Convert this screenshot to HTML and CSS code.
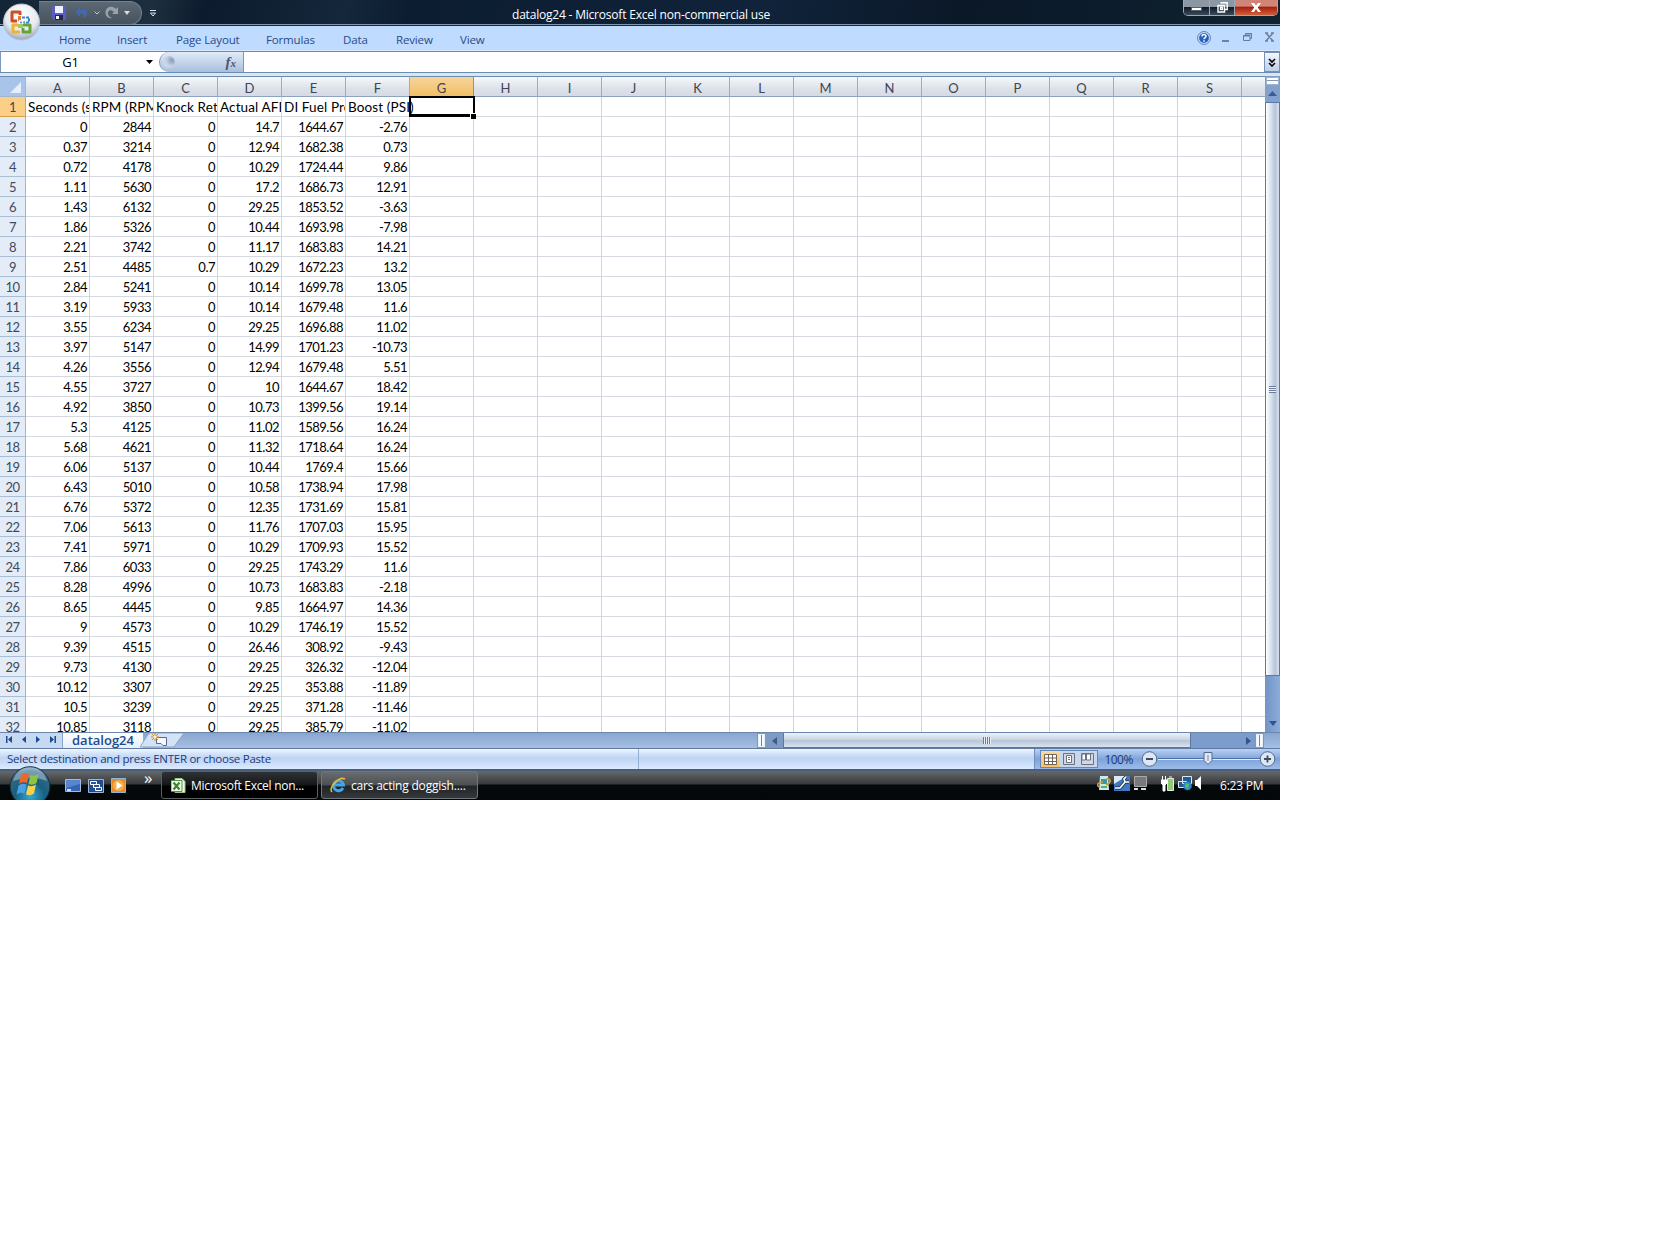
FILE: index.html
```html
<!DOCTYPE html>
<html lang="en">
<head>
<meta charset="utf-8">
<title>datalog24 - Microsoft Excel</title>
<link rel="stylesheet" href="styles.css">
</head>
<body>
<div class="desktop">
  <header class="titlebar">
    <div class="qat">
      <svg class="q-save" width="14" height="14" viewBox="0 0 14 14"><path d="M1 0h12l1 1v13H2l-2-2V1z" fill="#5d5cc0"/><path d="M3 0h8v7H3z" fill="#eef1ff"/><path d="M3 9h8v5H3z" fill="#242451"/><path d="M4 10h3v3H4z" fill="#fff"/></svg>
      <svg class="q-undo" width="14" height="14" viewBox="0 0 14 14"><path d="M0 6l5-5v3c5-2 8 0 7 4-.5 2-2 4-4 5 2-4 1-6-3-5v3z" fill="#4468ae"/></svg>
      <svg class="q-v" width="6" height="4" viewBox="0 0 6 4"><path d="M.5 .5L3 3 5.500.5" fill="none" stroke="#c0cad6"/></svg>
      <svg class="q-redo" width="14" height="14" viewBox="0 0 14 14"><path d="M13 8H7l2-2C6 3 3 4 3 7c0 2 1 4 4 5-4 1-7-2-6.500-6C1 1 7-1 11 3l2-2z" fill="#96a2ac"/></svg>
      <svg class="q-v2" width="6" height="4" viewBox="0 0 6 4"><path d="M0 0h6L3 4z" fill="#d6dde5"/></svg>
    </div>
    <svg class="q-more" width="6" height="7" viewBox="0 0 6 7"><path d="M0 .5h6M.5 3h5L3 6z" fill="none" stroke="#dde4ec"/></svg>
    <h1 class="title">datalog24 - Microsoft Excel non-commercial use</h1>
    <div class="winbtns">
      <span class="wb wb-min"><svg width="11" height="4"><path d="M.5.5h10v3H.5z" fill="#fff" stroke="#56616b"/></svg></span>
      <span class="wb wb-max"><svg width="11" height="11"><path d="M3.500.8h6.700v6.700H8M1 3.500h6.500V10H1zM3.500 5.500h2v2h-2z" fill="none" stroke="#fff" stroke-width="1.400"/></svg></span>
      <span class="wb wb-close"><svg width="10" height="9" viewBox="0 0 10 9"><path d="M0 0h3l2 2.500L7 0h3L6.800 4.400 10 9H7L5 6.300 3 9H0l3.200-4.600z" fill="#fff"/></svg></span>
    </div>
  </header>
  <svg class="orb" width="40" height="42" viewBox="0 0 40 42">
    <defs><radialGradient id="og" cx=".5" cy=".3" r=".7"><stop offset="0" stop-color="#fff"/><stop offset=".65" stop-color="#e6e9ee"/><stop offset="1" stop-color="#9aa6b9"/></radialGradient></defs>
    <circle cx="20.500" cy="22" r="18" fill="url(#og)" stroke="#b9c2cf"/>
    <g fill="none" stroke-width="3">
      <path d="M19 15v-3h-8v9h5" stroke="#cf4d22" stroke-linejoin="round"/>
      <path d="M21 17.500h7v5h-5" stroke="#3f85c6" stroke-width="2" stroke-dasharray="3 1"/>
      <path d="M17 25h-5v7h7" stroke="#edb42f" stroke-linejoin="round"/>
      <path d="M21 25h8v7h-7v-4" stroke="#65a33c" stroke-linejoin="round"/>
    </g>
    <path d="M17 16h3v5h-3z" fill="#e77a3a"/><path d="M17 24h5v4h-5z" fill="#a9c763"/><path d="M18 20h5v4h-5z" fill="#fff"/><path d="M19 22.500h5" stroke="#5b9fd8" stroke-width="2" stroke-dasharray="2 1"/>
  </svg>
  <nav class="ribbon">
    <div class="tabs"><span>Home</span><span>Insert</span><span>Page Layout</span><span>Formulas</span><span>Data</span><span>Review</span><span>View</span></div>
    <div class="ribbon-right">
      <svg width="14" height="14" viewBox="0 0 14 14"><circle cx="7" cy="7" r="6.400" fill="#dbe9ff" stroke="#5578ba"/><circle cx="7" cy="7" r="4.900" fill="#2460bd"/><path d="M5 5.500C5 3 9 3 9 5.300 9 6.600 7 6.500 7 8.300M7 9.300v1.500" fill="none" stroke="#fff" stroke-width="1.500"/></svg>
      <svg width="8" height="14"><path d="M0 9h7v2H0z" fill="#6d83a6"/></svg>
      <svg width="9" height="14"><path d="M2.500 4V2.500h6v5H7M.5 4.500h6.500v5H.5zM0 5h7M2 3h7" fill="none" stroke="#6a7c98"/></svg>
      <svg width="9" height="14"><path d="M1 2l7 8M8 2l-7 8M0 2h3M6 2h3M0 10h3M6 10h3" stroke="#6f7f98" stroke-width="1.500"/></svg>
    </div>
  </nav>
  <div class="formula">
    <div class="namebox"><span>G1</span><svg width="7" height="4"><path d="M0 0h7L3.500 4z"/></svg></div>
    <div class="fxbox"><i class="knob"></i><span class="fx">f<small>x</small></span></div>
    <div class="finput"></div>
    <div class="fexp"><svg width="8" height="9"><path d="M1 1l3 3 3-3M1 5l3 3 3-3" fill="none" stroke="#000" stroke-width="1.600"/></svg></div>
  </div>
  <main class="sheet">
    <div class="grid" id="grid"></div>
    <div class="vscroll">
      <div class="vsplit"></div>
      <div class="vbtn"><svg width="9" height="5"><path d="M0 5l4.500-5L9 5z" fill="#3b5c96"/></svg></div>
      <div class="vthumb"><i></i></div>
      <div class="vtrack"><svg width="8" height="5"><path d="M0 0h8L4 5z" fill="#30548f"/></svg></div>
    </div>
  </main>
  <div class="tabstrip">
    <div class="navs">
      <svg width="6" height="7"><path d="M0 0h1.500v7H0zM6 0v7L2 3.500z"/></svg>
      <svg width="4" height="7"><path d="M4 0v7L0 3.500z"/></svg>
      <svg width="4" height="7"><path d="M0 0v7l4-3.500z"/></svg>
      <svg width="6" height="7"><path d="M6 0H4.500v7H6zM0 0v7l4-3.500z"/></svg>
    </div>
    <div class="sheettab">datalog24</div>
    <svg class="newtab" width="46" height="15" viewBox="0 0 46 15"><path d="M0 14L9 0h35L34 14z" fill="#d3e2f5" stroke="#8ba4c9"/><path d="M16.500 4.500h10v8H23l-2-2h-4.500z" fill="#f5f8fc" stroke="#596c8d"/><path d="M15 0v8M11 4h8M12 1l6 6M18 1l-6 6" stroke="#dc8b26"/><circle cx="15" cy="4" r="1.500" fill="#fff3c4"/></svg>
    <div class="hspace"></div>
    <div class="hsplit"></div>
    <div class="hleft"><svg width="5" height="8"><path d="M5 0v8L0 4z" fill="#3b5c8c"/></svg></div>
    <div class="hthumb"><i></i></div>
    <div class="hright"><svg width="5" height="8"><path d="M0 0v8l5-4z" fill="#30548f"/></svg></div>
    <div class="hsplit"></div>
  </div>
  <div class="status">
    <div class="msg">Select destination and press ENTER or choose Paste</div>
    <div class="gap2"></div>
    <div class="zoombar">
      <div class="views">
        <span class="on"><svg width="13" height="11"><path d="M.5.5h12v10H.5zM4.500 0v11M8.500 0v11M0 4h13M0 7.500h13" fill="#fff" stroke="#6c6558"/></svg></span>
        <span><svg width="12" height="12"><path d="M.5.5h11v11H.5z" fill="#d3d7df" stroke="#6b7282"/><path d="M3.500 2.500h5v7h-5zM5 4.500h2M5 6.500h2" fill="#fff" stroke="#6b7282"/></svg></span>
        <span><svg width="13" height="12"><path d="M.5.500h12v11H.5z" fill="#d3d7df" stroke="#6b7282"/><path d="M1 1h3.500v6H1zM5.500 1h4v6h-4z" fill="#fff" stroke="#6b7282"/></svg></span>
      </div>
      <span class="pct">100%</span>
      <svg class="slider" width="136" height="18" viewBox="0 0 136 18"><path d="M17 8.500h102" stroke="#4b6fa8"/><path d="M17 9.500h102" stroke="#dfebfb"/><g fill="#dce6f4" stroke="#53698c"><circle cx="8.500" cy="9" r="7.300"/><circle cx="126.500" cy="9" r="7.300"/><path d="M63 2.500h8v8l-4 4-4-4z"/></g><path d="M5 9h7M123 9h7M126.500 5.500v7" stroke="#404c60" stroke-width="1.800"/><path d="M67 5v6" stroke="#7a8cab"/></svg>
    </div>
  </div>
  <footer class="taskbar">
    <div class="quick">
      <svg width="16" height="13"><path d="M.5.5h15v12H.5z" fill="#3564b8" stroke="#a5bbdc"/><path d="M1 1h14v4L1 9z" fill="#5686ce"/><path d="M2 10h4v2H2z" fill="#cfe0f6"/></svg>
      <svg width="16" height="14"><path d="M.5.5h15v13H.5z" fill="#234c8b" stroke="#9bb6da"/><path d="M2.500 2.500h6v3h-6zM5.500 5.500h6v3h-6zM7.500 8.500h6v3h-6z" fill="#28559d" stroke="#fff"/></svg>
      <svg width="15" height="15"><path d="M.5.5h14v14H.5z" fill="#e98b22" stroke="#87b9df"/><circle cx="7.500" cy="7.500" r="5.500" fill="#f6ac49"/><path d="M5.500 3.500v8l6-4z" fill="#fff"/></svg>
    </div>
    <span class="chev">»</span>
    <div class="task active"><svg width="15" height="15" viewBox="0 0 15 15"><path d="M4 .5h7l3 3v11H4z" fill="#eef6e8" stroke="#9fc08d"/><path d="M0 2.500h11v11H0z" fill="#f4faf0" stroke="#4f9140"/><path d="M2.500 4.500l6 7M8.500 4.500l-6 7" stroke="#3c8630" stroke-width="2.200"/></svg><span>Microsoft Excel non...</span></div>
    <div class="task"><svg width="16" height="16" viewBox="0 0 16 16"><path d="M13 11a5 5 0 1 1 .5-3H5" fill="none" stroke="#43a6e8" stroke-width="3"/><path d="M2 15C-2 11 9-1 15 2" fill="none" stroke="#e8b83b" stroke-width="1.700"/></svg><span class="ie">cars acting doggish....</span></div>
    <div class="tray">
      <svg width="14" height="15" viewBox="0 0 14 15"><path d="M3 0h8l1 14H2z" fill="#cbe8ef"/><path d="M4 3h6v5H4z" fill="#3498a8"/><path d="M3 11c-5-1-2-5 3-5M9 3c6-1 5 4 0 6" fill="none" stroke="#c9a23c" stroke-width="1.700"/><path d="M4 10h6v2H4z" fill="#54b65f"/></svg>
      <svg width="16" height="15"><path d="M0 0h16v15H0z" fill="#3f78c5"/><path d="M0 0h13L0 8z" fill="#dce9f7"/><path d="M1 12h5l5-6h4M11 6l-1-3 2-2" fill="none" stroke="#263b55" stroke-width="3.500"/><path d="M1 12h5l5-6h4M11 6l-1-3 2-2" fill="none" stroke="#fff" stroke-width="1.700"/></svg>
      <svg width="15" height="15"><path d="M1.500.5h12v10h-12z" fill="#77797c" stroke="#aaa"/><path d="M1 13h4M8 13h5" stroke="#ddd" stroke-width="2"/></svg>
      <svg class="batt" width="14" height="16"><path d="M6.500 2.500h6v12h-6zM8 1h3" fill="#8fca79" stroke="#e5eddf"/><path d="M1.500 0v4M4.500 0v4M0 4h6v3L4 9v6H2V9L0 7z" fill="#fff" stroke="#fff"/></svg>
      <svg width="14" height="15"><path d="M4.500.5h9v7h-9zM.5 5.500h8v6h-8z" fill="#245a92" stroke="#d8e9f8"/><circle cx="9.500" cy="10" r="4.300" fill="#2a85c8"/><path d="M8 7l3 1-1 5-3-2z" fill="#5abf62"/></svg>
      <svg width="8" height="14"><path d="M0 4h2l4-4v14l-4-4H0z" fill="#fff"/></svg>
    </div>
    <span class="clock">6:23 PM</span>
  </footer>
  <svg class="start" width="44" height="34" viewBox="0 0 44 34">
    <defs><radialGradient id="sg" cx=".5" cy=".75" r=".75"><stop offset="0" stop-color="#2faad8"/><stop offset=".5" stop-color="#17607f"/><stop offset=".85" stop-color="#3b6685"/><stop offset="1" stop-color="#8fb3cb"/></radialGradient></defs>
    <circle cx="22" cy="20.500" r="19.800" fill="url(#sg)" stroke="#18303f"/>
    <path d="M5 15C10-3 34-3 39 15 28 10 16 12 5 15z" fill="#c4dcea" opacity=".45"/>
    <path d="M13 9c3-2 5-2 8-1l-2 9c-3-1-5-1-8 1z" fill="#e8692b"/><path d="M22.500 9c3 1 5 1 8-1l-2 9c-3 2-5 2-8 1z" fill="#8cc540"/><path d="M10.500 19.500c3-2 5-2 8-1l-2 9c-3-1-5-1-8 1z" fill="#4c9fe0"/><path d="M20 19.500c3 1 5 1 8-1l-2 9c-3 2-5 2-8 1z" fill="#fbd04a"/>
  </svg>
</div>
<script src="grid.js"></script>
</body>
</html>
```
FILE: grid.js
```js
const headings = ["Seconds (s)", "RPM (RPM)", "Knock Retard", "Actual AFR", "DI Fuel Pressure", "Boost (PSI)"];
const log = `0 2844 0 14.7 1644.67 -2.76
0.37 3214 0 12.94 1682.38 0.73
0.72 4178 0 10.29 1724.44 9.86
1.11 5630 0 17.2 1686.73 12.91
1.43 6132 0 29.25 1853.52 -3.63
1.86 5326 0 10.44 1693.98 -7.98
2.21 3742 0 11.17 1683.83 14.21
2.51 4485 0.7 10.29 1672.23 13.2
2.84 5241 0 10.14 1699.78 13.05
3.19 5933 0 10.14 1679.48 11.6
3.55 6234 0 29.25 1696.88 11.02
3.97 5147 0 14.99 1701.23 -10.73
4.26 3556 0 12.94 1679.48 5.51
4.55 3727 0 10 1644.67 18.42
4.92 3850 0 10.73 1399.56 19.14
5.3 4125 0 11.02 1589.56 16.24
5.68 4621 0 11.32 1718.64 16.24
6.06 5137 0 10.44 1769.4 15.66
6.43 5010 0 10.58 1738.94 17.98
6.76 5372 0 12.35 1731.69 15.81
7.06 5613 0 11.76 1707.03 15.95
7.41 5971 0 10.29 1709.93 15.52
7.86 6033 0 29.25 1743.29 11.6
8.28 4996 0 10.73 1683.83 -2.18
8.65 4445 0 9.85 1664.97 14.36
9 4573 0 10.29 1746.19 15.52
9.39 4515 0 26.46 308.92 -9.43
9.73 4130 0 29.25 326.32 -12.04
10.12 3307 0 29.25 353.88 -11.89
10.5 3239 0 29.25 371.28 -11.46
10.85 3118 0 29.25 385.79 -11.02`.split("\n").map(line => line.split(" "));

const grid = document.getElementById("grid");
function add(cls, text) {
  const el = document.createElement("div");
  el.className = cls;
  if (text) {
    const span = document.createElement("span");
    span.textContent = text;
    el.append(span);
  }
  grid.append(el);
}

add("corner");
for (const letter of "ABCDEFGHIJKLMNOPQRS") add(letter === "G" ? "col picked" : "col", letter);
add("col last");
[headings, ...log].forEach((row, r) => {
  add(r === 0 ? "row picked" : "row", String(r + 1));
  for (let c = 0; c < 20; c++) {
    let cls = "cell";
    if (r === 0) cls += " head";
    if (r === 0 && c === 5) cls += " spill";
    if (r === 0 && c === 6) cls += " selected";
    if (c === 19) cls += " last";
    add(cls, row[c]);
  }
});
```
FILE: styles.css
```css
*, *::before, *::after { box-sizing: border-box; }
body { margin: 0; background: #fff; font-family: "Open Sans", "Noto Sans", sans-serif; font-size: 12px; }
svg { display: block; flex: none; }
.desktop { position: relative; width: 1280px; height: 800px; overflow: hidden; display: flex; flex-direction: column; }

.titlebar { height: 26px; flex: none; display: flex; align-items: flex-start; background: linear-gradient(100deg, #142535 0, #1d2f3f 12%, #0c1b2d 16%, #15273b 27%, #0c1d31 32%, #10233a 60%, #0b1828 75%, #0c1c2c 86%, #10222f 100%); border-bottom: 1px solid #17283a; box-shadow: inset 0 -1px #8297aa; }
.qat { width: 103px; height: 24px; margin-left: 39px; margin-top: 1px; display: flex; align-items: center; padding-left: 13px; background: linear-gradient(#5c6873, #46535f); border: 1px solid #75818c; border-left: 0; border-radius: 0 12px 12px 0; }
.q-undo { margin-left: 9px; }
.q-v { margin-left: 5px; }
.q-redo { margin-left: 5px; }
.q-v2 { margin-left: 5px; }
.q-more { margin: 10px 0 0 8px; }
.title { margin: 6px 0 0 356px; width: 270px; font-weight: 400; font-size: 12px; line-height: 17px; color: #fff; white-space: nowrap; letter-spacing: -0.2px; }
.winbtns { margin-left: auto; margin-right: 2px; display: flex; height: 16px; border: 1px solid #9aa9b6; border-top: 0; border-radius: 0 0 5px 5px; overflow: hidden; }
.wb { display: flex; align-items: center; justify-content: center; background: linear-gradient(#8b98a4 0 45%, #101c28 50%, #3c4c5b); border-right: 1px solid #9aa9b6; }
.wb-min { width: 26px; padding-top: 3px; }
.wb-max { width: 25px; }
.wb-close { width: 42px; border: 0; background: linear-gradient(#cf8577 0 40%, #a8210d 50%, #d0603f); }
.orb { position: absolute; left: 1px; top: 0; }

.ribbon { height: 26px; flex: none; display: flex; align-items: center; justify-content: space-between; background: #bfdbff; border-bottom: 1px solid #6d8ab0; box-shadow: inset 0 -1px #d7e8fd; }
.tabs { display: grid; grid-template-columns: 58px 59px 90px 77px 53px 64px 40px; padding: 1px 0 0 59px; color: #2b4a86; line-height: 17px; font-size: 11.5px; letter-spacing: -0.15px; white-space: nowrap; }
.ribbon-right { display: flex; gap: 13px; padding: 0 6px 1px 0; align-items: center; }
.ribbon-right svg:first-child { margin-right: -2px; }

.formula { height: 21px; flex: none; display: flex; background: #fff; border-bottom: 1px solid #6b8cab; }
.namebox { width: 159px; display: flex; align-items: center; border-left: 1px solid #7c98bd; font-size: 13px; }
.namebox span { width: 139px; text-align: center; letter-spacing: -0.2px; }
.namebox svg { margin-left: 6px; }
.fxbox { width: 85px; display: flex; align-items: center; justify-content: space-between; padding: 0 7px 0 3px; background: linear-gradient(#e1ebf8, #a9bfdf); border-radius: 10px 0 0 10px; border: 1px solid #7f97b8; border-top: 0; border-bottom: 0; }
.knob { width: 12px; height: 12px; border-radius: 50%; background: radial-gradient(circle at 75% 35%, #8a9bb8, #c7d3e5 50%, #d4dfef); }
.fx { font: italic bold 15px/18px "Liberation Serif", serif; color: #4a596e; }
.fx small { font-size: 11px; }
.finput { flex: 1; }
.fexp { width: 16px; border: 1px solid #7692b6; background: linear-gradient(#f3f7fc, #bccfe8); display: flex; align-items: center; justify-content: center; }

.sheet { height: 659px; flex: none; display: flex; padding-top: 3px; background: #d8e5f3; overflow: hidden; }
.grid { width: 1265px; height: 656px; overflow: hidden; display: grid; grid-template-columns: 26px repeat(19, 64px) 23px; grid-template-rows: 21px repeat(32, 20px); background: #fff; font-family: Lato, "Open Sans", sans-serif; }
.corner { background: #a9c4e9; border-top: 1px solid #6d8bae; border-right: 1px solid #9eb6ce; border-bottom: 1px solid #9eb6ce; position: relative; }
.corner::after { content: ""; position: absolute; right: 4px; bottom: 3px; border-left: 11px solid transparent; border-bottom: 11px solid #e6eefa; }
.col { background: linear-gradient(#f6f9fc, #dde2ea 60%, #d5dae3); border-top: 1px solid #6d8bae; border-right: 1px solid #9eacbf; border-bottom: 1px solid #8da3be; text-align: center; line-height: 22px; font-size: 13px; color: #3e454f; }
.col.picked { background: linear-gradient(#f8d49a, #f1bf66); border-right-color: #c28a34; border-bottom-color: #c28a34; }
.row { background: #e4ecf7; border-right: 1px solid #9eb6ce; border-bottom: 1px solid #a9bdd5; text-align: center; line-height: 21px; font-size: 13px; letter-spacing: -0.5px; color: #3e4b5e; }
.row.picked { background: #fbcf86; border-color: #d9a04a; }
.cell { border-right: 1px solid #cfd5db; border-bottom: 1px solid #d4dadf; overflow: hidden; white-space: nowrap; text-align: right; padding-right: 2px; line-height: 21px; font-size: 13px; letter-spacing: -0.5px; color: #000; }
.cell.head { text-align: left; padding: 0 0 0 2px; font-size: 13.5px; letter-spacing: 0.12px; }
.cell.spill { overflow: visible; }
.cell.selected { position: relative; overflow: visible; }
.cell.selected::before { content: ""; position: absolute; left: -1px; top: -1px; width: 66px; height: 21px; border: 3px solid #000; border-width: 2px 2px 3px; }
.cell.selected::after { content: ""; position: absolute; right: -3px; bottom: -3px; width: 6px; height: 6px; background: #000; border: 1px solid #fff; border-right: 0; border-bottom: 0; }
.last { border-right: 0; }

.vscroll { width: 15px; display: flex; flex-direction: column; background: #7c9dcc; }
.vsplit { height: 8px; margin: 1px 1px 0; background: linear-gradient(#fff 40%, #8598b0 40% 55%, #fff 55%); border: 1px solid #9eb3cf; }
.vbtn { height: 17px; display: flex; align-items: center; justify-content: center; background: #83a1cd; }
.vthumb { height: 574px; background: linear-gradient(90deg, #fff, #dce4f0 35%, #b5c5dc 70%, #d7e0ed); border: 1px solid #5b78a4; display: flex; align-items: center; justify-content: center; }
.vthumb i { width: 7px; height: 7px; background: repeating-linear-gradient(#6a7c97 0 1px, #eef 1px 2px); }
.vtrack { flex: 1; display: flex; align-items: flex-end; justify-content: center; padding-bottom: 6px; background: linear-gradient(90deg, #7294c6, #8badda); }

.tabstrip { height: 17px; flex: none; display: flex; background: linear-gradient(#88a6d0, #a7c0e2); border-top: 1px solid #6c86ac; border-bottom: 1px solid #5f7ba4; }
.navs { width: 63px; display: flex; align-items: center; gap: 10px; padding: 0 0 2px 6px; fill: #1f4b8c; background: #c5d9f3; border-right: 1px solid #8ba4c9; }
.sheettab { width: 80px; padding-left: 9px; background: linear-gradient(#fff, #e4effc); font: 600 13px/14px "Open Sans", sans-serif; color: #234a86; letter-spacing: 0; }
.newtab { margin-left: -3px; }
.hspace { flex: 1; }
.hsplit { width: 7px; margin: 1px 0; background: linear-gradient(90deg, #f5fafc 40%, #71849a 40% 55%, #f5fafc 55%); border: 1px solid #e8f2f8; outline: 1px solid #7e96ba; }
.hleft { width: 18px; display: flex; align-items: center; justify-content: center; background: #7f9bc4; }
.hthumb { width: 408px; display: flex; align-items: center; justify-content: center; background: linear-gradient(#edf2f8, #ccd7e5 45%, #b6c5d8 55%, #dbe4ee); border: 1px solid #5b78a4; border-top: 0; }
.hthumb i { width: 8px; height: 7px; background: repeating-linear-gradient(90deg, #6a7c97 0 1px, #e8eef6 1px 2px); }
.hright { width: 65px; display: flex; align-items: center; justify-content: flex-end; padding-right: 5px; background: #7c9dcc; }
.tabstrip .hsplit:last-child { margin-right: 17px; }

.status { height: 22px; flex: none; display: flex; background: linear-gradient(#f2f8ff 0, #d6e5fa 20%, #bfd4f3 45%, #c6dbf8 65%, #dcebff); border-bottom: 2px solid #4b5e78; color: #1c3a78; line-height: 19px; white-space: nowrap; }
.msg { width: 639px; padding-left: 7px; font-size: 11.5px; letter-spacing: -0.26px; border-right: 1px solid #94afd5; }
.gap2 { flex: 1; border-right: 1px solid #6e8fbf; }
.zoombar { width: 245px; display: flex; align-items: center; background: linear-gradient(#b9d2f3, #7fa3d8 50%, #9cbdea); }
.views { display: flex; height: 18px; margin-left: 5px; border: 1px solid #6486b8; background: #c6d7ee; }
.views span { width: 18.500px; display: flex; align-items: center; justify-content: center; }
.views .on { background: linear-gradient(#fbd9a0, #f8c168); }
.pct { margin-left: 7px; width: 29px; font-size: 12px; letter-spacing: -0.55px; }
.slider { margin-left: 7px; }

.taskbar { height: 29px; flex: none; display: flex; align-items: flex-start; background: linear-gradient(#66696b 0, #37393b 13px, #04090b 14px, #030708 100%); color: #fff; }
.quick { display: flex; align-items: center; gap: 7px; margin: 7px 0 0 65px; }
.chev { margin: -3px 0 0 18px; width: 17px; font-size: 17px; line-height: 20px; }
.task { width: 157px; height: 28px; display: flex; align-items: center; gap: 5px; padding-left: 8px; margin-right: 3px; border: 1px solid #70767a; border-radius: 3px; background: linear-gradient(#686c6e, #4c5052 13px, #202426 14px, #34383a); white-space: nowrap; letter-spacing: -0.28px; }
.task.active { padding-left: 9px; background: linear-gradient(#303335, #141618 13px, #000 14px); border-color: #5a6064; }
.task .ie { letter-spacing: -0.2px; }
.tray { display: flex; align-items: flex-start; gap: 3px; margin: 5px 0 0 auto; }
.tray svg:nth-child(3) { margin-right: 1px; }
.tray .batt { margin-left: 9px; }
.clock { margin: 6px 0 0 17px; width: 60px; line-height: 17px; letter-spacing: -0.2px; }
.start { position: absolute; left: 8px; bottom: 0; }
```
